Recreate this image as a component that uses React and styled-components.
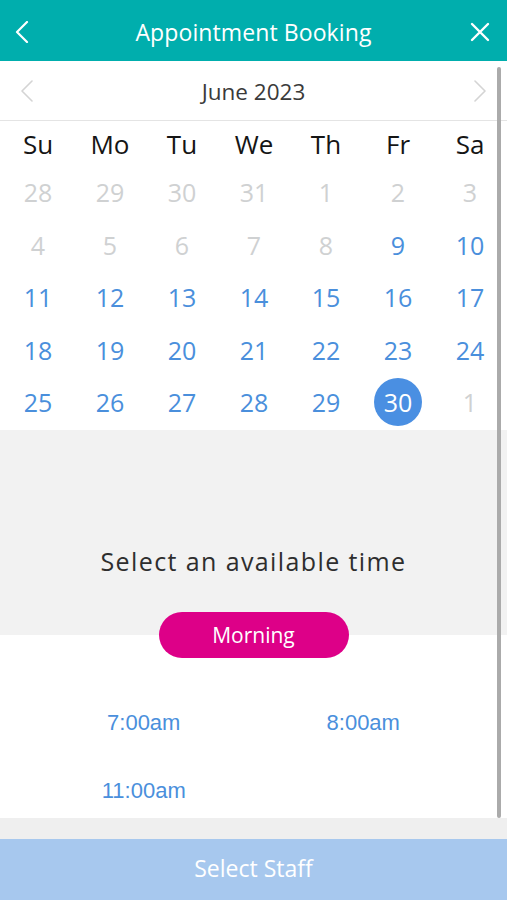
import React from "react";
import styled, { createGlobalStyle } from "styled-components";

const Global = createGlobalStyle`
  html, body { margin: 0; padding: 0; background: #ffffff; }
  body { font-family: "Open Sans", "Noto Sans", sans-serif; }
  * { box-sizing: border-box; }
`;

const Page = styled.div`
  width: 507px;
  height: 900px;
  display: flex;
  flex-direction: column;
  overflow: hidden;
  background: #ffffff;
`;

const Header = styled.header`
  height: 61px;
  flex: none;
  background: #00aead;
  display: grid;
  grid-template-columns: 44px 1fr 54px;
  align-items: center;
  color: #ffffff;
`;

const HeaderTitle = styled.h1`
  margin: 0 -10px 0 0;
  text-align: center;
  font-size: 23px;
  font-weight: 400;
  line-height: 61px;
  padding-top: 2px;
  letter-spacing: 0.1px;
`;

const IconCell = styled.div`
  display: flex;
  align-items: center;
  justify-content: center;
  height: 100%;
`;

const Body = styled.main`
  position: relative;
  flex: none;
  height: 757px;
  display: flex;
  flex-direction: column;
`;

const Scrollbar = styled.div`
  position: absolute;
  top: 6px;
  bottom: 0;
  left: 497px;
  width: 4px;
  border-radius: 2px;
  background: #ababab;
`;

const MonthBar = styled.div`
  height: 60px;
  flex: none;
  display: grid;
  grid-template-columns: 54px 1fr 54px;
  align-items: center;
  border-bottom: 1px solid #e4e4e4;
`;

const MonthLabel = styled.div`
  text-align: center;
  font-size: 22.5px;
  color: #3a3a3a;
  padding-top: 1px;
`;

const Grid = styled.div`
  display: grid;
  grid-template-columns: repeat(7, 72px);
  padding-left: 2px;
`;

const WeekDay = styled.div`
  height: 45px;
  display: flex;
  align-items: center;
  justify-content: center;
  font-size: 26px;
  color: #151515;
`;

const Day = styled.div`
  height: 52.5px;
  display: flex;
  align-items: center;
  justify-content: center;
  font-size: 25px;
  color: ${(p) => (p.$muted ? "#cfd1d2" : "#4a8fdc")};
`;

const Selected = styled.span`
  width: 48px;
  height: 48px;
  border-radius: 50%;
  background: #4a8fe2;
  color: #ffffff;
  display: flex;
  align-items: center;
  justify-content: center;
`;

const CalendarPad = styled.div`
  height: 1px;
`;

const GraySection = styled.section`
  height: 205px;
  flex: none;
  background: #f2f2f2;
  display: flex;
  flex-direction: column;
  align-items: center;
  justify-content: flex-end;
`;

const SectionTitle = styled.h2`
  margin: 0 0 34px;
  font-size: 25px;
  font-weight: 400;
  letter-spacing: 1.4px;
  color: #2e2e2e;
  line-height: 33px;
`;

const Pill = styled.div`
  width: 190px;
  height: 46px;
  margin-bottom: -23px;
  border-radius: 23px;
  background: #dd0088;
  color: #ffffff;
  font-size: 21px;
  display: flex;
  align-items: center;
  justify-content: center;
  position: relative;
  z-index: 1;
`;

const Times = styled.div`
  flex: 1;
  display: grid;
  grid-template-columns: 1fr 1fr;
  grid-auto-rows: 40px;
  row-gap: 28px;
  padding: 68px 34px 0;
  background: #ffffff;
`;

const Slot = styled.div`
  display: flex;
  align-items: center;
  justify-content: center;
  font-family: "Liberation Sans", Arial, sans-serif;
  font-size: 22px;
  color: #4a8fdc;
`;

const Footer = styled.footer`
  flex: 1;
  background: #efefef;
  padding-top: 21px;
  display: flex;
  flex-direction: column;
`;

const FooterButton = styled.div`
  flex: 1;
  background: #a7c8ee;
  color: #ffffff;
  font-size: 23px;
  padding-bottom: 3px;
  display: flex;
  align-items: center;
  justify-content: center;
`;

const Chevron = ({ dir = "left", color, w = 2 }) => (
  <svg width="14" height="22" viewBox="0 0 14 22" fill="none">
    <path
      d={dir === "left" ? "M12 1 L2 11 L12 21" : "M2 1 L12 11 L2 21"}
      stroke={color}
      strokeWidth={w}
      strokeLinecap="round"
      strokeLinejoin="round"
    />
  </svg>
);

const CloseIcon = () => (
  <svg width="20" height="20" viewBox="0 0 20 20" fill="none">
    <path d="M2 2 L18 18 M18 2 L2 18" stroke="#ffffff" strokeWidth="2.4" strokeLinecap="round" />
  </svg>
);

const weekDays = ["Su", "Mo", "Tu", "We", "Th", "Fr", "Sa"];

const days = [
  [28, true], [29, true], [30, true], [31, true], [1, true], [2, true], [3, true],
  [4, true], [5, true], [6, true], [7, true], [8, true], [9, false], [10, false],
  [11, false], [12, false], [13, false], [14, false], [15, false], [16, false], [17, false],
  [18, false], [19, false], [20, false], [21, false], [22, false], [23, false], [24, false],
  [25, false], [26, false], [27, false], [28, false], [29, false], [30, false, true], [1, true],
];

export default function App() {
  return (
    <Page>
      <Global />
      <Header>
        <IconCell>
          <Chevron dir="left" color="#ffffff" w={2.2} />
        </IconCell>
        <HeaderTitle>Appointment Booking</HeaderTitle>
        <IconCell>
          <CloseIcon />
        </IconCell>
      </Header>
      <Body>
        <MonthBar>
          <IconCell>
            <Chevron dir="left" color="#d4d4d4" w={1.6} />
          </IconCell>
          <MonthLabel>June 2023</MonthLabel>
          <IconCell>
            <Chevron dir="right" color="#d4d4d4" w={1.6} />
          </IconCell>
        </MonthBar>
        <Grid>
          {weekDays.map((d) => (
            <WeekDay key={d}>{d}</WeekDay>
          ))}
          {days.map(([n, muted, sel], i) => (
            <Day key={i} $muted={muted}>
              {sel ? <Selected>{n}</Selected> : n}
            </Day>
          ))}
        </Grid>
        <CalendarPad />
        <GraySection>
          <SectionTitle>Select an available time</SectionTitle>
          <Pill>Morning</Pill>
        </GraySection>
        <Times>
          <Slot>7:00am</Slot>
          <Slot>8:00am</Slot>
          <Slot>11:00am</Slot>
        </Times>
        <Scrollbar />
      </Body>
      <Footer>
        <FooterButton>Select Staff</FooterButton>
      </Footer>
    </Page>
  );
}
